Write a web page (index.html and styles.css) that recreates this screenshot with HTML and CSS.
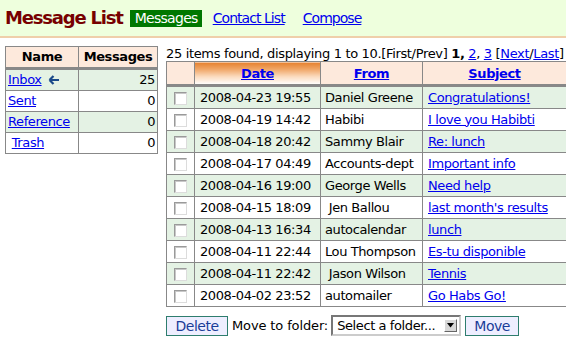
FILE: index.html
```html
<!DOCTYPE html>
<html>
<head>
<meta charset="utf-8">
<link rel="stylesheet" href="styles.css">
</head>
<body>
<div class="topbar">
  <h1 class="title">Message List</h1>
  <nav class="nav">
    <span class="tab-active">Messages</span>
    <a href="#" class="tab">Contact List</a>
    <a href="#" class="tab">Compose</a>
  </nav>
</div>
<div class="main">
  <table class="folders">
    <colgroup><col class="c-name"><col class="c-count"></colgroup>
    <thead>
      <tr><th>Name</th><th>Messages</th></tr>
    </thead>
    <tbody>
      <tr class="alt"><td><a href="#">Inbox</a> <svg class="arrow" width="12" height="10" viewBox="0 0 12 10"><path d="M1.5 5 L5.5 1 M1.5 5 L5.5 9 M1.5 5 H11" stroke="#1a4a8a" stroke-width="2.2" fill="none"/></svg></td><td class="num">25</td></tr>
      <tr><td><a href="#">Sent</a></td><td class="num">0</td></tr>
      <tr class="alt"><td><a href="#">Reference</a></td><td class="num">0</td></tr>
      <tr><td>&nbsp;<a href="#">Trash</a></td><td class="num">0</td></tr>
    </tbody>
  </table>
  <div class="content">
    <div class="pager">25 items found, displaying 1 to 10.[First/Prev] <b>1,</b> <a href="#">2</a>, <a href="#">3</a> [<a href="#">Next</a>/<a href="#">Last</a>]</div>
    <table class="msgs">
      <colgroup><col class="c-cb"><col class="c-date"><col class="c-from"><col class="c-subj"></colgroup>
      <thead>
        <tr><th></th><th class="sorted"><a href="#">Date</a></th><th><a href="#">From</a></th><th><a href="#">Subject</a></th></tr>
      </thead>
      <tbody>
        <tr class="alt"><td class="cb"><span class="box"></span></td><td>2008-04-23 19:55</td><td>Daniel Greene</td><td><a href="#">Congratulations!</a></td></tr>
        <tr><td class="cb"><span class="box"></span></td><td>2008-04-19 14:42</td><td>Habibi</td><td><a href="#">I love you Habibti</a></td></tr>
        <tr class="alt"><td class="cb"><span class="box"></span></td><td>2008-04-18 20:42</td><td>Sammy Blair</td><td><a href="#">Re: lunch</a></td></tr>
        <tr><td class="cb"><span class="box"></span></td><td>2008-04-17 04:49</td><td>Accounts-dept</td><td><a href="#">Important info</a></td></tr>
        <tr class="alt"><td class="cb"><span class="box"></span></td><td>2008-04-16 19:00</td><td>George Wells</td><td><a href="#">Need help</a></td></tr>
        <tr><td class="cb"><span class="box"></span></td><td>2008-04-15 18:09</td><td>&nbsp;Jen Ballou</td><td><a href="#">last month's results</a></td></tr>
        <tr class="alt"><td class="cb"><span class="box"></span></td><td>2008-04-13 16:34</td><td>autocalendar</td><td><a href="#">lunch</a></td></tr>
        <tr><td class="cb"><span class="box"></span></td><td>2008-04-11 22:44</td><td>Lou Thompson</td><td><a href="#">Es-tu disponible</a></td></tr>
        <tr class="alt"><td class="cb"><span class="box"></span></td><td>2008-04-11 22:42</td><td>&nbsp;Jason Wilson</td><td><a href="#">Tennis</a></td></tr>
        <tr><td class="cb"><span class="box"></span></td><td>2008-04-02 23:52</td><td>automailer</td><td><a href="#">Go Habs Go!</a></td></tr>
      </tbody>
    </table>
    <div class="actions">
      <button class="btn btn-delete">Delete</button>
      <span class="label">Move to folder:</span>
      <span class="select"><span class="seltext">Select a folder...</span><span class="selbtn"><svg width="7" height="5" viewBox="0 0 7 5"><path d="M0 0 H7 L3.5 4.5 Z" fill="#000"/></svg></span></span>
      <button class="btn btn-move">Move</button>
    </div>
  </div>
</div>
</body>
</html>
```

FILE: styles.css
```css
html, body {
  margin: 0;
  padding: 0;
  background: #ffffff;
  font-family: "DejaVu Sans", "Liberation Sans", sans-serif;
  font-size: 13px;
  letter-spacing: -0.4px;
  color: #000;
}
a { color: #0000ee; }

.topbar {
  display: flex;
  align-items: center;
  height: 36px;
  background: #eeffdd;
  border-bottom: 2px solid #efcfaa;
  padding-left: 5px;
}
.title {
  margin: 0 0 1px 0;
  font-size: 18px;
  letter-spacing: -1.2px;
  font-weight: bold;
  color: #770000;
}
.nav {
  display: flex;
  align-items: center;
  margin-left: 7px;
}
.tab-active {
  background: #007700;
  color: #ffffff;
  padding: 1px 4px 1px 5px;
  font-size: 14px;
  letter-spacing: -0.7px;
  line-height: 15px;
}
.tab {
  font-size: 14px;
  letter-spacing: -0.95px;
  margin-left: 11px;
  margin-right: 7px;
}

.main {
  display: flex;
  align-items: flex-start;
  padding: 8px 2px 0 5px;
  gap: 8px;
}

.folders {
  border-collapse: collapse;
  table-layout: fixed;
  width: 152px;
  border: 1px solid #888;
}
.c-name { width: 73px; }
.c-count { width: 79px; }
.folders th, .folders td {
  border: 1px solid #888;
  padding: 1px 2px 2px 2px;
  line-height: 16px;
  height: 17px;
  white-space: nowrap;
}
.folders th {
  background: #fde9dc;
  border-bottom: 3px solid #888;
  font-weight: bold;
}
.folders .num { text-align: right; }
.folders tr.alt td { background: #e4f2e4; }
.arrow { vertical-align: -1px; margin-left: 3px; }

.content {
  display: flex;
  flex-direction: column;
}
.pager {
  line-height: 15px;
  margin-top: 0;
  letter-spacing: -0.34px;
  white-space: nowrap;
}
.msgs {
  border-collapse: collapse;
  table-layout: fixed;
  width: 400px;
  border: 1px solid #888;
}
.c-cb { width: 28px; }
.c-date { width: 126px; }
.c-from { width: 102px; }
.c-subj { width: 144px; }
.msgs th, .msgs td {
  border: 1px solid #888;
  padding: 2px 5px 2px 5px;
  line-height: 16px;
  height: 17px;
  white-space: nowrap;
  overflow: hidden;
}
.msgs th {
  background: #fde9dc;
  border-bottom: 3px solid #888;
  font-weight: bold;
  padding-top: 3px;
  padding-bottom: 2px;
}
.msgs th.sorted {
  background: linear-gradient(to bottom, #e5812e 0%, #f0a565 30%, #fbdcc0 65%, #ffffff 100%);
}
.msgs td.cb { text-align: center; padding: 0; }
.msgs tr.alt td { background: #e4f2e4; }
.msgs td:nth-child(3) { padding-left: 4px; padding-right: 2px; }
.box {
  display: inline-block;
  width: 11px;
  height: 11px;
  border: 1px solid #9a9a9a;
  border-right-color: #dcdcdc;
  border-bottom-color: #dcdcdc;
  background: #fff;
  box-shadow: inset 1px 1px 0 #c8c8c8;
  vertical-align: middle;
}

.actions {
  display: flex;
  align-items: center;
  margin-top: 8px;
  height: 21px;
}
.btn {
  font-family: "DejaVu Sans", sans-serif;
  font-size: 14px;
  letter-spacing: -0.5px;
  color: #1a3d99;
  background: #eeeeff;
  border: 1px solid #2e7d6e;
  padding: 0;
  height: 20px;
  line-height: 18px;
  margin: 0;
}
.btn-delete { width: 62px; }
.btn-move { width: 54px; }
.label { margin-left: 4px; margin-right: 3px; letter-spacing: -0.13px; }
.select {
  display: inline-flex;
  align-items: center;
  height: 21px;
  box-sizing: border-box;
  border: 2px solid #777;
  border-right-color: #ccc;
  border-bottom-color: #ccc;
  background: #fff;
  width: 130px;
  padding-left: 4px;
  margin-right: 4px;
}
.seltext { flex: 1; white-space: nowrap; }
.selbtn {
  display: inline-flex;
  align-items: center;
  justify-content: center;
  width: 11px;
  height: 11px;
  background: #d8d8d8;
  border: 1px solid #fff;
  border-right-color: #666;
  border-bottom-color: #666;
  margin-right: 2px;
}
```
